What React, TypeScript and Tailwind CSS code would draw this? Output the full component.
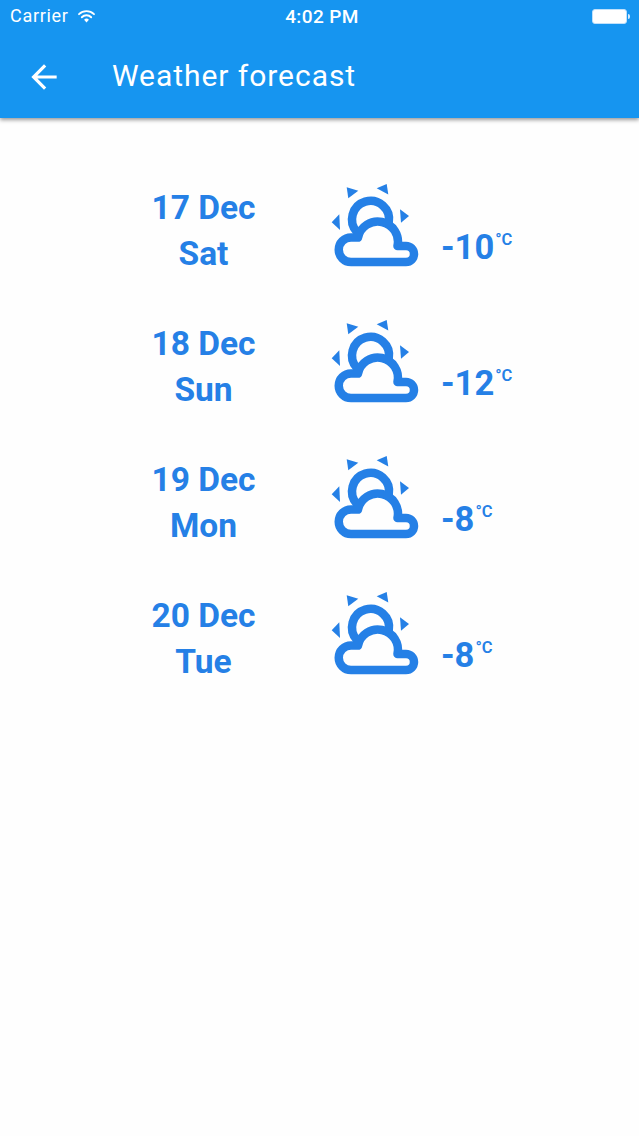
const forecast = [
	{ date: '17 Dec', day: 'Sat', temp: '-10' },
	{ date: '18 Dec', day: 'Sun', temp: '-12' },
	{ date: '19 Dec', day: 'Mon', temp: '-8' },
	{ date: '20 Dec', day: 'Tue', temp: '-8' },
];

function StatusBar() {
	return (
		<div className="grid h-[32px] grid-cols-3 items-center pr-[9px] pl-[10px] text-white">
			<div className="flex items-center gap-[8px]">
				<span className="text-[18px] leading-none font-normal tracking-[0.7px]">Carrier</span>
				<svg width="19" height="15" viewBox="0 0 20 16" fill="none" stroke="currentColor" strokeWidth="2" strokeLinecap="round">
					<path d="M2 5.5a11.5 11.5 0 0 1 16 0" />
					<path d="M5 8.8a7 7 0 0 1 10 0" />
					<path d="M10 14.5l-2.6-3a3.6 3.6 0 0 1 5.2 0z" fill="currentColor" stroke="none" />
				</svg>
			</div>
			<div className="pl-[4px] text-center text-[19px] leading-none font-medium tracking-[0.4px]">4:02 PM</div>
			<div className="flex items-center justify-end">
				<div className="h-[15px] w-[35px] rounded-[3px] border border-[#bfe0fb] bg-white" />
				<div className="ml-[1px] h-[5px] w-[2px] rounded-r-sm bg-[#d5eafc]" />
			</div>
		</div>
	);
}

function WeatherIcon() {
	return (
		<svg width="100" height="100" viewBox="0 0 100 100" fill="none" className="ml-[17px] shrink-0 text-[#2580e6]">
			<g fill="currentColor">
				<path d="M26.700 12.300L38.300 15.700 28.300 23.300z" />
				<path d="M56.700 13.300L66.700 9 68.300 19.500z" />
				<path d="M80 34.300L89 41 81 47.700z" />
				<path d="M19.300 39.300L11.700 47.300 20 55z" />
			</g>
			<g stroke="currentColor" strokeWidth="8.500">
				<path d="M37 57A18.500 18.500 0 1 1 68.750 47.500" />
				<path d="M31 87H86A8 8 0 0 0 86 71H77.500A20 20 0 0 0 38 62.500H31A12.250 12.250 0 0 0 31 87Z" strokeLinejoin="round" />
			</g>
		</svg>
	);
}

function ForecastRow({ date, day, temp }: { date: string; day: string; temp: string }) {
	return (
		<div className="flex h-[136px] text-[#2580e6]">
			<div className="mt-[10px] w-[199px] text-center text-[33.5px] leading-[46px] font-bold">
				<div>{date}</div>
				<div>{day}</div>
			</div>
			<WeatherIcon />
			<div className="mt-[48px] ml-[21px] flex items-start">
				<span className="text-[34.5px] leading-[48px] font-bold">{temp}</span>
				<span className="mt-[7px] ml-[1px] text-[16.5px] leading-[20px] font-semibold">°C</span>
			</div>
		</div>
	);
}

export default function App() {
	return (
		<div className="min-h-[1136px] bg-[#fefefe] font-['Roboto',sans-serif]">
			<div className="h-[118px] bg-[#1695f0] shadow-[0_2px_4px_rgba(0,0,0,0.4)]">
				<StatusBar />
				<div className="flex items-center pt-[25px] text-white">
					<svg width="38" height="38" viewBox="0 0 24 24" fill="currentColor" className="ml-[25px]">
						<path d="M20 11H7.830l5.590-5.590L12 4l-8 8 8 8 1.410-1.410L7.830 13H20v-2z" />
					</svg>
					<span className="mb-[2px] ml-[49px] text-[30px] leading-[38px] tracking-[0.95px]">Weather forecast</span>
				</div>
			</div>
			<div className="pt-[57px] pl-[104px]">
				{forecast.map((item) => (
					<ForecastRow key={item.date} {...item} />
				))}
			</div>
		</div>
	);
}
